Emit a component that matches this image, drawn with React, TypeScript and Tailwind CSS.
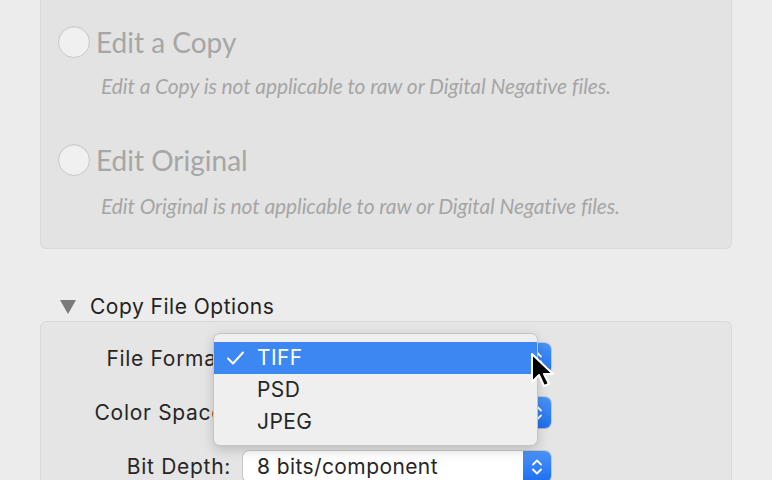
const Radio = () => (
  <span className="w-[32px] h-[32px] rounded-full border border-[#c9c9c9] bg-[#f0f0f0] shadow-[inset_0_1px_1px_rgba(0,0,0,0.06)] shrink-0" />
);

const Stepper = () => (
  <span className="w-[28px] self-stretch rounded-r-[6px] bg-gradient-to-b from-[#4a93f8] to-[#1c6ff0] flex items-center justify-center">
    <svg width="12" height="20" viewBox="0 0 12 20" fill="none" stroke="white" strokeWidth="1.8" strokeLinecap="round" strokeLinejoin="round">
      <path d="M2 7.5 6 3.5 10 7.5" />
      <path d="M2 12.5 6 16.5 10 12.5" />
    </svg>
  </span>
);

const Select = ({ value }: { value: string }) => (
  <div className="w-[308px] h-[31px] flex items-stretch rounded-[6px] bg-white shadow-[0_0_0_1px_rgba(0,0,0,0.12),0_1px_1px_rgba(0,0,0,0.1)]">
    <span className="flex-1 pl-[14px] flex items-center tracking-[0.4px]">{value}</span>
    <Stepper />
  </div>
);

const Row = ({ label, value }: { label: string; value: string }) => (
  <div className="flex items-center h-[31px]">
    <span className="w-[190px] text-right pr-[12px] tracking-[0.7px]">{label}</span>
    <Select value={value} />
  </div>
);

const App = () => {
  return (
    <main className="relative w-[772px] h-[480px] overflow-hidden bg-[#ececec] px-[40px] font-['Inter',sans-serif]">
      <section className="bg-[#e3e3e3] border-x border-b border-[#d9d9d9] rounded-b-[6px] pt-[26px] pb-[30px] pl-[17px] font-['Lato',sans-serif] text-[#a6a6a6]">
        <div className="flex items-center gap-[6px] h-[32px]">
          <Radio />
          <span className="text-[28px]">Edit a Copy</span>
        </div>
        <p className="mt-[16px] ml-[43px] h-[24px] text-[21px] italic leading-[24px] tracking-[-0.1px] whitespace-nowrap">
          Edit a Copy is not applicable to raw or Digital Negative files.
        </p>
        <div className="mt-[46px] flex items-center gap-[6px] h-[32px]">
          <Radio />
          <span className="text-[28px]">Edit Original</span>
        </div>
        <p className="mt-[18px] ml-[43px] h-[24px] text-[21px] italic leading-[24px] tracking-[-0.1px] whitespace-nowrap">
          Edit Original is not applicable to raw or Digital Negative files.
        </p>
      </section>

      <div className="mt-[44px] h-[28px] flex items-center gap-[14px] pl-[20px] text-[21px] tracking-[0.5px] text-[#222]">
        <svg width="16" height="16" viewBox="0 0 16 16">
          <path d="M0 1h16L8 15z" fill="#7a7a7a" />
        </svg>
        <span>Copy File Options</span>
      </div>

      <section className="bg-[#e5e5e5] border-x border-t border-[#dadada] rounded-t-[6px] pt-[21px] pl-[12px] h-[200px] flex flex-col gap-[23px] text-[21px] text-[#262626]">
        <Row label="File Format:" value="TIFF" />
        <Row label="Color Space:" value="" />
        <Row label="Bit Depth:" value="8 bits/component" />
      </section>

      <div className="absolute left-[213px] top-[333px] w-[325px] h-[113px] rounded-[7px] bg-[#efefef] border border-[#c4c4c4] shadow-[0_4px_12px_rgba(0,0,0,0.18)] pt-[8px] text-[21px] tracking-[0.4px] text-[#262626]">
        <div className="h-[32px] bg-[#3d87f2] text-white flex items-center">
          <svg className="ml-[12px]" width="20" height="16" viewBox="0 0 20 16" fill="none" stroke="white" strokeWidth="2" strokeLinecap="round" strokeLinejoin="round">
            <path d="M2 8.5 7 13.5 17 2.5" />
          </svg>
          <span className="ml-[11px]">TIFF</span>
        </div>
        <div className="h-[32px] flex items-center pl-[43px]">PSD</div>
        <div className="h-[32px] flex items-center pl-[43px]">JPEG</div>
      </div>

      <svg className="absolute left-[530px] top-[352px]" width="24" height="36" viewBox="0 0 24 36">
        <path d="M2 2v28l7-7 5 11 5-2-5-10h9z" fill="#000" stroke="#fff" strokeWidth="2" strokeLinejoin="round" />
      </svg>
    </main>
  );
};

export default App;
